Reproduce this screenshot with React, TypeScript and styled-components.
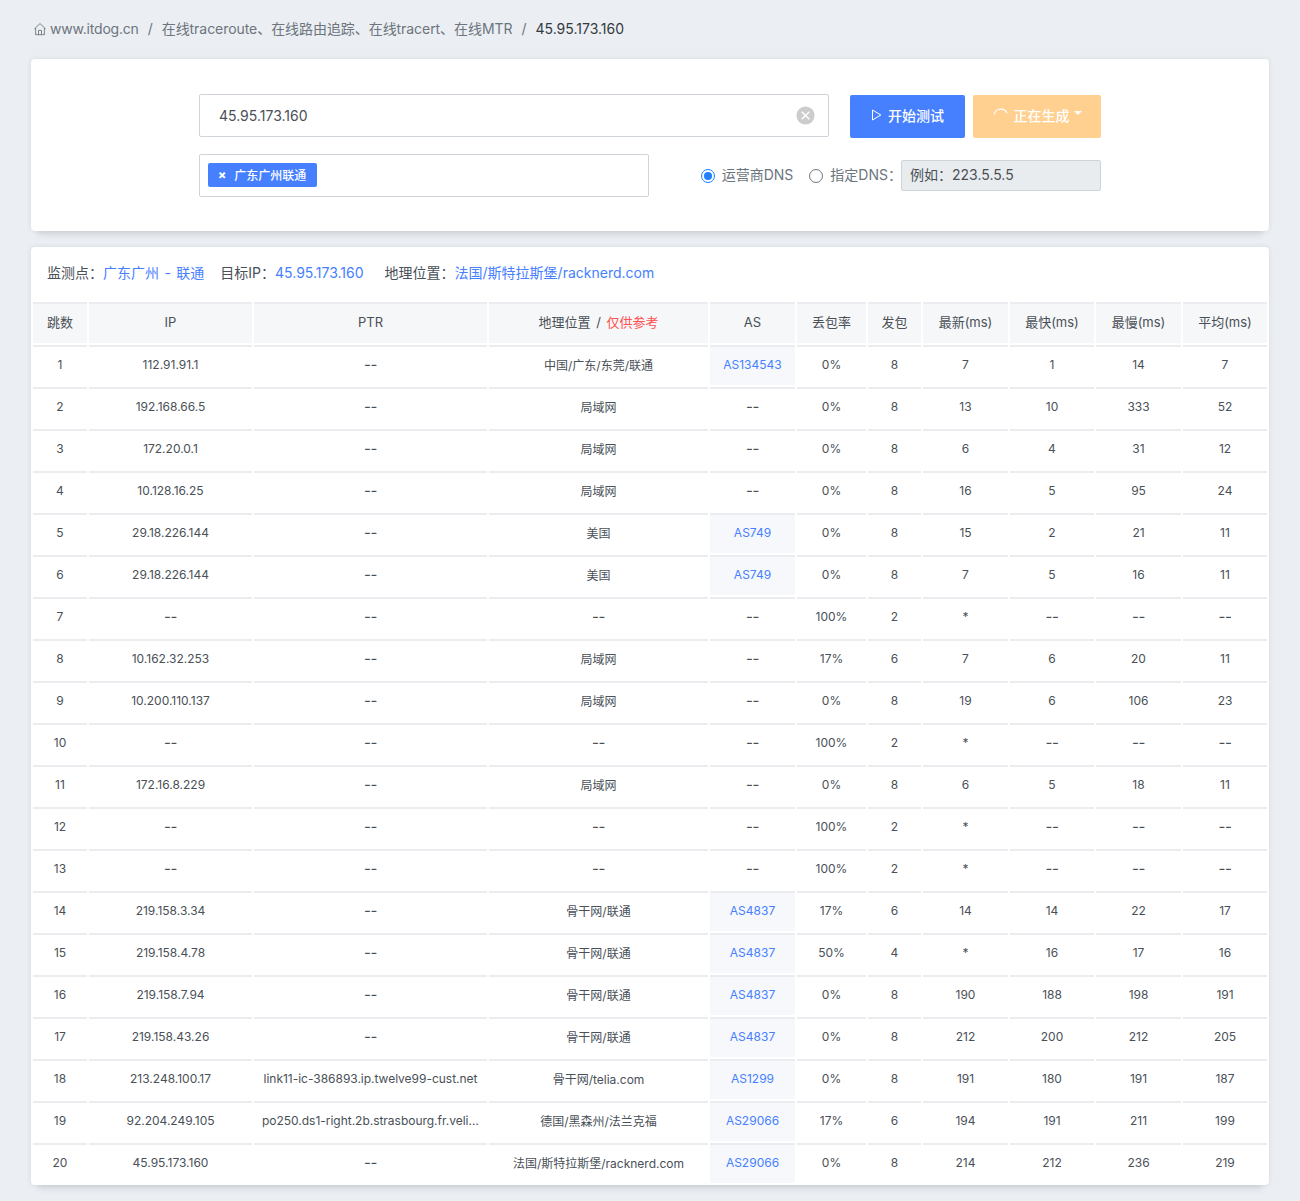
import React from 'react';
import styled, { createGlobalStyle } from 'styled-components';

const Global = createGlobalStyle`
  html, body { margin: 0; padding: 0; background: #ebeef3; }
  body { font-family: Inter, "Noto Sans CJK SC", sans-serif; color: #495057; font-size: 14px; }
  * { box-sizing: border-box; }
`;

const Page = styled.div`
  padding: 19px 31px 16px;
`;

const Crumbs = styled.nav`
  display: flex;
  align-items: center;
  height: 20px;
  margin-bottom: 20px;
  padding-left: 2px;
  font-size: 14px;
  line-height: 20px;
  color: #6c757d;
`;

const HomeIcon = styled.svg`
  width: 14px;
  height: 14px;
  margin-right: 3px;
  fill: none;
  stroke: #6c757d;
  stroke-width: 1;
`;

const CrumbLink = styled.span<{ $spacing: number }>`
  letter-spacing: ${p => p.$spacing}px;
`;

const Sep = styled.span`
  margin: 0 9px;
`;

const Current = styled.span`
  color: #343a40;
`;

const Card = styled.section`
  background: #fff;
  border-radius: 4px;
  box-shadow: 0 0 5px 0 rgba(43, 43, 43, 0.1), 0 11px 6px -7px rgba(43, 43, 43, 0.1);
`;

const SearchCard = styled(Card)`
  padding: 35px 0 34px;
  margin-bottom: 16px;
`;

const Form = styled.div`
  width: 902px;
  margin: 0 auto;
  display: flex;
  flex-direction: column;
  gap: 16px;
`;

const FormRow = styled.div`
  display: flex;
  align-items: flex-start;
`;

const TargetBox = styled.div`
  flex: 0 0 630px;
  height: 43px;
  display: flex;
  align-items: center;
  justify-content: space-between;
  padding: 0 13px 0 19px;
  border: 1px solid #ced4da;
  border-radius: 2px;
  font-size: 14px;
  color: #495057;
`;

const ClearIcon = styled.svg`
  width: 19px;
  height: 19px;
`;

const Button = styled.div<{ $bg: string }>`
  height: 43px;
  margin-top: 1px;
  padding-bottom: 4px;
  display: flex;
  align-items: center;
  justify-content: center;
  background: ${p => p.$bg};
  border-radius: 2px;
  color: #fff;
  font-size: 14px;
  font-weight: 500;
`;

const StartButton = styled(Button)`
  width: 115px;
  margin-left: 21px;
  gap: 6px;
`;

const WaitButton = styled(Button)`
  width: 128px;
  margin-left: 8px;
  gap: 6px;
`;

const Caret = styled.span`
  width: 0;
  height: 0;
  margin-left: -2px;
  margin-top: -3px;
  border-left: 4px solid transparent;
  border-right: 4px solid transparent;
  border-top: 4px solid #fff;
`;

const TagBox = styled.div`
  flex: 0 0 450px;
  height: 43px;
  display: flex;
  align-items: center;
  padding-left: 8px;
  padding-bottom: 2px;
  border: 1px solid #ced4da;
  border-radius: 2px;
`;

const Tag = styled.div`
  height: 24px;
  width: 109px;
  display: flex;
  align-items: center;
  padding-left: 10px;
  gap: 8px;
  background: #4680ff;
  border-radius: 2px;
  color: #fff;
  font-size: 12px;
  font-weight: 500;
`;

const TagClose = styled.span`
  font-weight: 800;
`;

const DnsGroup = styled.div`
  flex: 1;
  height: 43px;
  display: flex;
  align-items: center;
  justify-content: flex-end;
  font-size: 14px;
  color: #6c757d;
`;

const Radio = styled.span<{ $on?: boolean }>`
  width: 14px;
  height: 14px;
  margin-right: 7px;
  border-radius: 50%;
  border: 1px solid ${p => (p.$on ? '#1e7fff' : '#6f7780')};
  padding: 2px;
  background: ${p => (p.$on ? '#1e7fff' : 'transparent')} content-box;
`;

const RadioLabel = styled.span<{ $last?: boolean }>`
  margin-right: ${p => (p.$last ? -1 : 16)}px;
  margin-bottom: 3px;
`;

const DnsInput = styled.div`
  width: 200px;
  height: 31px;
  display: flex;
  align-items: center;
  padding: 0 0 3px 8px;
  background: #e9ecef;
  border: 1px solid #ced4da;
  border-radius: 2px;
  color: #495057;
`;

const ResultCard = styled(Card)`
  overflow: hidden;
`;

const Info = styled.div`
  height: 53px;
  display: flex;
  align-items: center;
  padding: 0 16px 3px;
  gap: 21px;
  font-size: 14px;
  color: #495057;
`;

const InfoFirst = styled.span`
  margin-right: -5px;
  word-spacing: 1.5px;
`;

const Accent = styled.span`
  color: #4680ff;
`;

const Danger = styled.span`
  color: #ff5252;
`;

const Table = styled.table`
  width: 1238px;
  table-layout: fixed;
  border-collapse: separate;
  border-spacing: 2px;
`;

const Head = styled.th`
  height: 41px;
  padding: 0 0 4px;
  background: #f6f7f8;
  border-top: 2px solid #eaecf0;
  font-size: 13px;
  font-weight: 400;
  color: #495057;
  text-align: center;
  word-spacing: 2px;
`;

const Cell = styled.td<{ $tint?: boolean }>`
  height: 40px;
  padding: 0 8px 4px;
  background: ${p => (p.$tint ? '#f6f8fc' : 'transparent')};
  border-top: 2px solid #eaecf0;
  font-size: 12px;
  color: #495057;
  text-align: center;
  white-space: nowrap;
  overflow: hidden;
  text-overflow: ellipsis;
`;

const PtrCell = styled(Cell)`
  letter-spacing: -0.02px;
`;

const Dash = styled.span`
  font-size: 15px;
  line-height: 1;
  letter-spacing: -0.5px;
  vertical-align: -1px;
`;

const widths = [54, 163, 233, 219, 85, 69, 53, 85, 84, 85, 84];

type Row = [string, string, string, string, string, string, string, string, string, string];

const rows: Row[] = [
  ['112.91.91.1', '--', '中国/广东/东莞/联通', 'AS134543', '0%', '8', '7', '1', '14', '7'],
  ['192.168.66.5', '--', '局域网', '--', '0%', '8', '13', '10', '333', '52'],
  ['172.20.0.1', '--', '局域网', '--', '0%', '8', '6', '4', '31', '12'],
  ['10.128.16.25', '--', '局域网', '--', '0%', '8', '16', '5', '95', '24'],
  ['29.18.226.144', '--', '美国', 'AS749', '0%', '8', '15', '2', '21', '11'],
  ['29.18.226.144', '--', '美国', 'AS749', '0%', '8', '7', '5', '16', '11'],
  ['--', '--', '--', '--', '100%', '2', '*', '--', '--', '--'],
  ['10.162.32.253', '--', '局域网', '--', '17%', '6', '7', '6', '20', '11'],
  ['10.200.110.137', '--', '局域网', '--', '0%', '8', '19', '6', '106', '23'],
  ['--', '--', '--', '--', '100%', '2', '*', '--', '--', '--'],
  ['172.16.8.229', '--', '局域网', '--', '0%', '8', '6', '5', '18', '11'],
  ['--', '--', '--', '--', '100%', '2', '*', '--', '--', '--'],
  ['--', '--', '--', '--', '100%', '2', '*', '--', '--', '--'],
  ['219.158.3.34', '--', '骨干网/联通', 'AS4837', '17%', '6', '14', '14', '22', '17'],
  ['219.158.4.78', '--', '骨干网/联通', 'AS4837', '50%', '4', '*', '16', '17', '16'],
  ['219.158.7.94', '--', '骨干网/联通', 'AS4837', '0%', '8', '190', '188', '198', '191'],
  ['219.158.43.26', '--', '骨干网/联通', 'AS4837', '0%', '8', '212', '200', '212', '205'],
  ['213.248.100.17', 'link11-ic-386893.ip.twelve99-cust.net', '骨干网/telia.com', 'AS1299', '0%', '8', '191', '180', '191', '187'],
  ['92.204.249.105', 'po250.ds1-right.2b.strasbourg.fr.velia.net', '德国/黑森州/法兰克福', 'AS29066', '17%', '6', '194', '191', '211', '199'],
  ['45.95.173.160', '--', '法国/斯特拉斯堡/racknerd.com', 'AS29066', '0%', '8', '214', '212', '236', '219'],
];

function renderValue(v: string, j: number) {
  if (v === '--') {
    return (
      <Cell key={j}>
        <Dash>{v}</Dash>
      </Cell>
    );
  }
  if (j === 3) {
    return (
      <Cell key={j} $tint>
        <Accent>{v}</Accent>
      </Cell>
    );
  }
  if (j === 1) return <PtrCell key={j}>{v}</PtrCell>;
  return <Cell key={j}>{v}</Cell>;
}

export default function App() {
  return (
    <Page>
      <Global />
      <Crumbs>
        <HomeIcon viewBox="0 0 16 16">
          <path d="M1.5 8 8 1.8 14.5 8" />
          <path d="M3 6.8V14.5h10V6.8" />
          <path d="M6.3 14.5V9.6h3.4v4.9" />
        </HomeIcon>
        <CrumbLink $spacing={-0.2}>www.itdog.cn</CrumbLink>
        <Sep>/</Sep>
        <CrumbLink $spacing={-0.06}>在线traceroute、在线路由追踪、在线tracert、在线MTR</CrumbLink>
        <Sep>/</Sep>
        <Current>45.95.173.160</Current>
      </Crumbs>

      <SearchCard>
        <Form>
          <FormRow>
            <TargetBox>
              45.95.173.160
              <ClearIcon viewBox="0 0 20 20">
                <circle cx="10" cy="10" r="9.5" fill="#ccc" />
                <path d="M6 6l8 8M14 6l-8 8" stroke="#fff" strokeWidth="1.6" />
              </ClearIcon>
            </TargetBox>
            <StartButton $bg="#4680ff">
              <svg width="11" height="12" viewBox="0 0 11 12" fill="none" stroke="#fff" strokeWidth="1">
                <path d="M1.5 1v10L9.8 6z" />
              </svg>
              开始测试
            </StartButton>
            <WaitButton $bg="#ffd08f">
              <svg width="15" height="15" viewBox="0 0 15 15" fill="none" stroke="#fff" strokeWidth="1.2">
                <path d="M1 7.5A7 7 0 0 1 14 6" />
              </svg>
              正在生成
              <Caret />
            </WaitButton>
          </FormRow>
          <FormRow>
            <TagBox>
              <Tag>
                <TagClose>×</TagClose>
                广东广州联通
              </Tag>
            </TagBox>
            <DnsGroup>
              <Radio $on />
              <RadioLabel>运营商DNS</RadioLabel>
              <Radio />
              <RadioLabel $last>指定DNS：</RadioLabel>
              <DnsInput>例如：223.5.5.5</DnsInput>
            </DnsGroup>
          </FormRow>
        </Form>
      </SearchCard>

      <ResultCard>
        <Info>
          <InfoFirst>
            监测点：<Accent>广东广州 - 联通</Accent>
          </InfoFirst>
          <span>
            目标IP：<Accent>45.95.173.160</Accent>
          </span>
          <span>
            地理位置：<Accent>法国/斯特拉斯堡/racknerd.com</Accent>
          </span>
        </Info>
        <Table>
          <colgroup>
            {widths.map((w, i) => (
              <col key={i} width={w} />
            ))}
          </colgroup>
          <thead>
            <tr>
              <Head>跳数</Head>
              <Head>IP</Head>
              <Head>PTR</Head>
              <Head>
                地理位置 / <Danger>仅供参考</Danger>
              </Head>
              <Head>AS</Head>
              <Head>丢包率</Head>
              <Head>发包</Head>
              <Head>最新(ms)</Head>
              <Head>最快(ms)</Head>
              <Head>最慢(ms)</Head>
              <Head>平均(ms)</Head>
            </tr>
          </thead>
          <tbody>
            {rows.map((r, i) => (
              <tr key={i}>
                <Cell>{i + 1}</Cell>
                {r.map((v, j) => renderValue(v, j))}
              </tr>
            ))}
          </tbody>
        </Table>
      </ResultCard>
    </Page>
  );
}
